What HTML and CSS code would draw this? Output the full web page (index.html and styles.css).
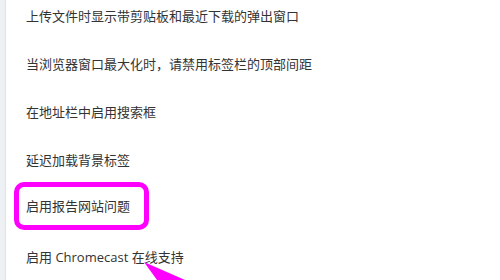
FILE: index.html
```html
<!DOCTYPE html>
<html lang="zh-CN">
<head>
<meta charset="utf-8">
<title>flags</title>
<link rel="stylesheet" href="styles.css">
</head>
<body>
<div class="page">
  <div class="rail"></div>
  <ul class="list">
    <li class="row">上传文件时显示带剪贴板和最近下载的弹出窗口</li>
    <li class="row">当浏览器窗口最大化时，请禁用标签栏的顶部间距</li>
    <li class="row">在地址栏中启用搜索框</li>
    <li class="row">延迟加载背景标签</li>
    <li class="row"><span class="mark">启用报告网站问题</span></li>
    <li class="row">启用 Chromecast 在线支持</li>
  </ul>
  <svg class="arrow" width="60" height="30" viewBox="0 0 60 30">
    <polygon points="4,2 17,20 45,20" fill="#ff00ff"/>
  </svg>
</div>
</body>
</html>
```
FILE: styles.css
```css
html, body {
  margin: 0;
  padding: 0;
  background: #ffffff;
  overflow: hidden;
}
.page {
  position: relative;
  display: flex;
  width: 500px;
  height: 280px;
  overflow: hidden;
  font-family: "Open Sans", "Noto Sans CJK SC", sans-serif;
  font-size: 13px;
  color: #333333;
}
.rail {
  width: 5px;
  flex: none;
  background: #eef1f4;
  border-right: 1px solid #e0e4e8;
}
.list {
  list-style: none;
  margin: -9px 0 0 0;
  padding: 0 0 0 20px;
  flex: 1;
}
.row {
  height: 48.2px;
  display: flex;
  align-items: center;
  white-space: nowrap;
}
.mark {
  display: inline-block;
  margin-left: -12px;
  margin-top: -4px;
  padding: 0 14px 0 7px;
  line-height: 38px;
  border: 5px solid #ff00ff;
  border-radius: 10px;
}
.arrow {
  position: absolute;
  left: 140px;
  top: 260px;
}
```
